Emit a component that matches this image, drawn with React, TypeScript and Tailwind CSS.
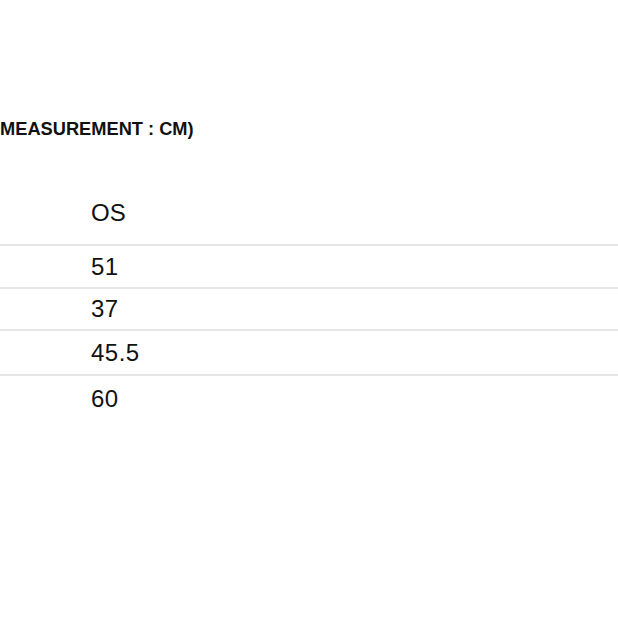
const ROWS = [
  { value: '51', h: 'h-[43px]' },
  { value: '37', h: 'h-[42px]' },
  { value: '45.5', h: 'h-[45px]' },
  { value: '60', h: 'h-[48px]' },
];

export default function App() {
  return (
    <main
      className="min-h-[618px] w-[618px] overflow-hidden bg-white text-[#111111]"
      style={{ fontFamily: '"Liberation Sans", Arial, sans-serif' }}
    >
      <h2 className="mt-[120px] whitespace-nowrap text-[18.25px] font-bold leading-[18px]">
        MEASUREMENT : CM)
      </h2>

      <div className="mt-[44px]">
        <div className="flex h-[62px] items-center pl-[91px] text-[24px]">OS</div>
        {ROWS.map((row) => (
          <div
            key={row.value}
            className={`flex items-center border-t-2 border-[#e6e6e6] pl-[91px] text-[24px] tracking-[0.5px] ${row.h}`}
          >
            {row.value}
          </div>
        ))}
      </div>
    </main>
  );
}
